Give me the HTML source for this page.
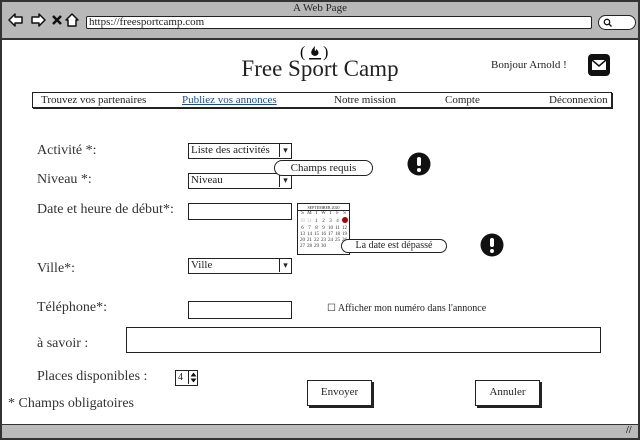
<!DOCTYPE html>
<html><head><meta charset="utf-8">
<style>
*{margin:0;padding:0;box-sizing:border-box}
body{width:640px;height:440px;position:relative;background:#fff;font-family:"Liberation Serif",serif;color:#222;overflow:hidden}
.a{position:absolute}
.box{position:absolute;border:1.5px solid #222;background:#fff}
.lbl{position:absolute;font-size:14px;color:#333}
.sel{position:absolute;border:1.5px solid #222;background:#fff;font-size:11px;padding-left:2px;line-height:13px}
.sel::after{content:"▾";position:absolute;right:0;top:-1px;width:11px;height:100%;border-left:1.5px solid #222;font-size:9px;text-align:center;line-height:14px}
.nav{font-size:11px;color:#222}
.btn{position:absolute;border:1.5px solid #222;box-shadow:2px 2px 0 #222;background:#fff;font-size:11px;text-align:center}
.tip{position:absolute;border:1.2px solid #222;border-radius:9px;background:#fff;font-size:11px;text-align:center}
.cal td{font-size:5px;text-align:center;color:#333;width:7px;height:6px;line-height:6px}
</style></head><body>
<div class="a" style="left:0;top:0;width:640px;height:440px;border:2px solid #333"></div>
<div class="a" style="left:2px;top:2px;width:636px;height:38px;background:#b8b8b8;border-bottom:2px solid #333"></div>
<div class="a" style="left:0;top:2px;width:640px;text-align:center;font-size:11px">A Web Page</div>
<svg class="a" style="left:8px;top:12px" width="74" height="16" viewBox="0 0 74 16">
<path d="M1 8 L7 2 V5 H14 V11 H7 V14 Z" fill="#fff" stroke="#111" stroke-width="1.5" stroke-linejoin="round"/>
<path d="M37 8 L31 2 V5 H24 V11 H31 V14 Z" fill="#fff" stroke="#111" stroke-width="1.5" stroke-linejoin="round"/>
<path d="M45 4 L53 12 M53 4 L45 12" stroke="#111" stroke-width="2.5"/>
<path d="M58 8 L64 2 L70 8 H68 V14 H60 V8 Z" fill="#fff" stroke="#111" stroke-width="1.5" stroke-linejoin="round"/>
</svg>
<div class="a" style="left:86px;top:16px;width:506px;height:13px;background:#fff;border:1.5px solid #222;border-radius:2px;font-size:11px;line-height:11px;padding-left:2px">https://freesportcamp.com</div>
<div class="a" style="left:598px;top:15px;width:38px;height:15px;background:#fff;border:1.5px solid #222;border-radius:8px"><svg style="position:absolute;left:4px;top:2px" width="9" height="9"><circle cx="4" cy="4" r="2.7" fill="none" stroke="#111" stroke-width="1.3"/><path d="M6 6 L8.5 8.5" stroke="#111" stroke-width="1.3"/></svg></div>

<svg class="a" style="left:300px;top:42px" width="30" height="20" viewBox="0 0 30 20"><text x="0" y="15" font-size="16" font-family="Liberation Serif">(</text><text x="23" y="15" font-size="16" font-family="Liberation Serif">)</text><path d="M15 4 C10 9 10 13 15 14 C20 13 19 9 16 7 C16 10 14 10 15 4Z" fill="#111"/><rect x="9" y="16" width="12" height="1.5" fill="#111"/></svg>
<div class="a" style="left:0;top:56px;width:640px;text-align:center;font-size:23px;color:#222">Free Sport Camp</div>
<div class="a" style="left:491px;top:59px;font-size:11px">Bonjour Arnold !</div>
<svg class="a" style="left:587px;top:53px" width="24" height="24"><rect x="1" y="1" width="22" height="22" rx="4" fill="#111"/><rect x="5" y="7" width="14" height="10" fill="#fff"/><path d="M5 7 L12 13 L19 7" stroke="#111" stroke-width="1.5" fill="none"/></svg>

<div class="a" style="left:32px;top:92px;width:580px;height:16px;border:1.5px solid #222;box-shadow:1px 1px 0 #222"></div>
<div class="a nav" style="left:41px;top:94px">Trouvez vos partenaires</div>
<div class="a nav" style="left:182px;top:94px;color:#1a4f8a;text-decoration:underline">Publiez vos annonces</div>
<div class="a nav" style="left:334px;top:94px">Notre mission</div>
<div class="a nav" style="left:445px;top:94px">Compte</div>
<div class="a nav" style="left:549px;top:94px">Déconnexion</div>

<div class="lbl" style="left:37px;top:143px">Activité *:</div>
<div class="lbl" style="left:37px;top:172px">Niveau *:</div>
<div class="lbl" style="left:37px;top:202px">Date et heure de début*:</div>
<div class="lbl" style="left:37px;top:261px">Ville*:</div>
<div class="lbl" style="left:37px;top:300px">Téléphone*:</div>
<div class="lbl" style="left:37px;top:336px">à savoir :</div>
<div class="lbl" style="left:37px;top:369px">Places disponibles :</div>
<div class="lbl" style="left:8px;top:396px">* Champs obligatoires</div>

<div class="sel" style="left:188px;top:143px;width:104px;height:16px">Liste des activités</div>
<div class="sel" style="left:188px;top:173px;width:104px;height:16px">Niveau</div>
<div class="box" style="left:188px;top:203px;width:104px;height:17px"></div>
<div class="sel" style="left:188px;top:258px;width:104px;height:16px">Ville</div>
<div class="box" style="left:188px;top:301px;width:104px;height:18px"></div>
<div class="box" style="left:126px;top:327px;width:475px;height:26px"></div>
<div class="a" style="left:175px;top:370px;width:23px;height:16px;border:1.5px solid #222;font-size:10px;line-height:13px;padding-left:2px">4
<svg style="position:absolute;right:0;top:0;border-left:1px solid #222" width="9" height="13"><path d="M1.5 5.5 L4.5 1.5 L7.5 5.5Z M1.5 7.5 L4.5 11.5 L7.5 7.5Z" fill="#111"/></svg></div>
<div class="a" style="left:327px;top:303px;font-size:10px">☐ Afficher mon numéro dans l'annonce</div>

<div class="tip" style="left:274px;top:160px;width:99px;height:16px;line-height:14px">Champs requis</div>
<svg class="a" style="left:407px;top:152px" width="24" height="24"><circle cx="12" cy="12" r="11.5" fill="#111"/><rect x="10" y="5" width="4" height="9" rx="2" fill="#fff"/><circle cx="12" cy="18" r="2" fill="#fff"/></svg>
<svg class="a" style="left:480px;top:233px" width="24" height="24"><circle cx="12" cy="12" r="11.5" fill="#111"/><rect x="10" y="5" width="4" height="9" rx="2" fill="#fff"/><circle cx="12" cy="18" r="2" fill="#fff"/></svg>

<div class="a" style="left:297px;top:203px;width:53px;height:52px;border:1.5px solid #222;background:#fff">
<div style="font-size:4px;text-align:center;border-bottom:1px solid #222;height:7px;line-height:7px">SEPTEMBER 2020</div>
<table class="cal" style="border-collapse:collapse;margin-left:1px"><tr><td>S</td><td>M</td><td>T</td><td>W</td><td>T</td><td>F</td><td>S</td></tr>
<tr><td style="color:#bbb">30</td><td style="color:#bbb">31</td><td>1</td><td>2</td><td>3</td><td>4</td><td><span style="display:inline-block;width:6px;height:6px;border-radius:3px;background:#a00"></span></td></tr>
<tr><td>6</td><td>7</td><td>8</td><td>9</td><td>10</td><td>11</td><td>12</td></tr>
<tr><td>13</td><td>14</td><td>15</td><td>16</td><td>17</td><td>18</td><td>19</td></tr>
<tr><td>20</td><td>21</td><td>22</td><td>23</td><td>24</td><td>25</td><td>26</td></tr>
<tr><td>27</td><td>28</td><td>29</td><td>30</td><td></td><td></td><td></td></tr></table></div>
<div class="tip" style="left:341px;top:239px;width:106px;height:14px;line-height:12px;font-size:10px">La date est dépassé</div>

<div class="btn" style="left:307px;top:380px;width:65px;height:26px;line-height:23px">Envoyer</div>
<div class="btn" style="left:475px;top:380px;width:65px;height:26px;line-height:23px">Annuler</div>

<div class="a" style="left:2px;top:424px;width:636px;height:14px;background:#bbb;border-top:1.5px solid #333"></div>
<div class="a" style="left:626px;top:425px;font-size:10px;font-weight:bold">//</div>
</body></html>
